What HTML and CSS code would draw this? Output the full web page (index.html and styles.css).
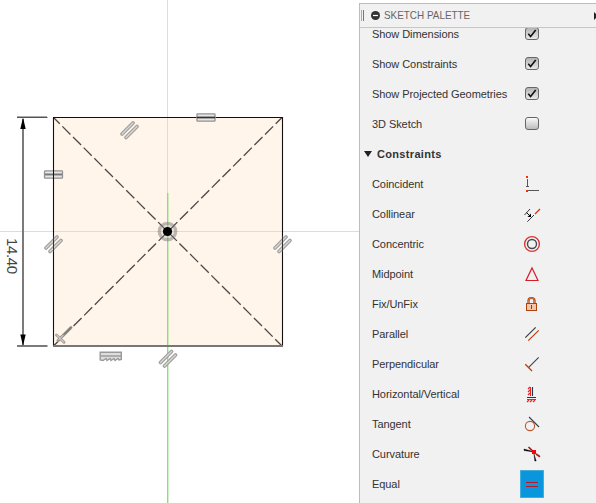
FILE: index.html
```html
<!DOCTYPE html>
<html lang="en">
<head>
<meta charset="utf-8">
<title>Sketch Palette</title>
<link rel="stylesheet" href="styles.css">
</head>
<body>
<main class="app">
  <section class="canvas">
    <svg width="359" height="503" viewBox="0 0 359 503">
      <defs>
        <g id="c-par" fill="none" stroke-linecap="round">
          <path d="M-7 4L4-7M-3 7.500L8-3.500" stroke="#a2a09e" stroke-width="3.800"/>
          <path d="M-7 4L4-7M-3 7.500L8-3.500" stroke="#d9d7d4" stroke-width="1.300"/>
        </g>
        <g id="c-eq" fill="#ddd" fill-opacity=".7" stroke="#929292" stroke-width="1.300">
          <rect x="-9" y="-3.700" width="18" height="3.700" rx=".6"/>
          <rect x="-9" y="0" width="18" height="3.700" rx=".6"/>
        </g>
      </defs>
      <rect x="53.500" y="117.500" width="229" height="228.500" fill="#fff5ea"/>
      <path d="M0 231.500H359M167.500 0V193" stroke="#dedcda"/>
      <rect x="167" y="193" width="1.400" height="310" fill="#86e272"/>
      <g stroke="#4f4743" stroke-width="1.300" stroke-dasharray="11.400 3.650" stroke-dashoffset="2.500">
        <path d="M53.500 117.500L282 346"/>
        <path d="M282 117.500L53.500 346"/>
      </g>
      <path d="M53.500 346V117.500H282.500V346" fill="none" stroke="#111" stroke-width="1.100"/>
      <path d="M53 346H283" stroke="#777" stroke-width="2"/>
      <path d="M17 117.500H47.500M17 117H47" stroke="#555"/>
      <path d="M17 346H47.500M23 119V345" stroke="#7b7b7b" stroke-width="2"/>
      <path d="M23 117.500L25.700 129H20.300ZM23 346L25.700 334.500H20.300Z"/>
      <text class="dimension" transform="translate(7 238) rotate(90)" textLength="36">14.40</text>
      <circle cx="167.500" cy="231.500" r="8.200" fill="none" stroke="#777" stroke-opacity=".5" stroke-width="3.300"/>
      <circle cx="167.500" cy="231.500" r="6.500" fill="#aaa" fill-opacity=".25"/>
      <circle cx="167.500" cy="231.500" r="4.600"/>
      <use href="#c-par" x="129" y="130"/>
      <use href="#c-par" x="53" y="244"/>
      <use href="#c-par" x="282" y="244"/>
      <use href="#c-par" x="167.500" y="358.500"/>
      <use href="#c-eq" x="206" y="117.500"/>
      <use href="#c-eq" x="53.500" y="174.500"/>
      <path d="M197 117.500H215" stroke="#333" stroke-width="1.500"/>
      <path d="M45 174.500H62" stroke="#777" stroke-width="1.500"/>
      <path d="M53.500 169V180" stroke="#111"/>
      <path d="M282.500 236V252M53.500 236V252" stroke="#333"/>
      <g fill="none" stroke="#999" stroke-width="1.400">
        <path d="M100.200 352.200H121.300V359.500L119 360L118 358.500L115 360.500L114 358.500L111 360.500L110 358.500L107 360.500L106 358.500L103 360.500L100.200 360Z" fill="#ddd"/>
        <path d="M101 356H121"/>
      </g>
      <g fill="none" stroke-linecap="round">
        <path d="M56.500 335L64 342.300" stroke="#a8a5a1" stroke-width="3"/>
        <path d="M58 340.500L71 327.500" stroke="#99958f" stroke-width="3"/>
        <path d="M57 335.500L63.500 341.800M58.500 340L63 335.500" stroke="#e2ddd5"/>
        <path d="M64.500 334L71 327.500" stroke="#666"/>
      </g>
    </svg>
  </section>

  <aside class="palette">
    <header class="palette-header">
      <span class="grip"></span>
      <svg class="collapse" width="9" height="9" viewBox="0 0 9 9"><circle cx="4.500" cy="4.500" r="4.500" fill="#333"/><path d="M2 4.500H7" stroke="#fff" stroke-width="1.200"/></svg>
      <h1 class="palette-title">SKETCH PALETTE</h1>
      <svg class="more" width="2" height="8" viewBox="0 0 2 8"><path d="M0 0L2 2V6L0 8Z" fill="#222"/></svg>
    </header>
    <div class="rows-clip">
      <div class="rows">
        <div class="row"><span class="label">Show Dimensions</span><span class="slot"><span class="check on"><svg width="14" height="13" viewBox="0 0 14 13"><path d="M3.300 6.800L5.600 9.500L10.700 3"/></svg></span></span></div>
        <div class="row"><span class="label">Show Constraints</span><span class="slot"><span class="check on"><svg width="14" height="13" viewBox="0 0 14 13"><path d="M3.300 6.800L5.600 9.500L10.700 3"/></svg></span></span></div>
        <div class="row"><span class="label">Show Projected Geometries</span><span class="slot"><span class="check on"><svg width="14" height="13" viewBox="0 0 14 13"><path d="M3.300 6.800L5.600 9.500L10.700 3"/></svg></span></span></div>
        <div class="row"><span class="label">3D Sketch</span><span class="slot"><span class="check"></span></span></div>
        <div class="row group"><span class="triangle"></span><h2 class="group-title">Constraints</h2></div>
        <div class="row"><span class="label">Coincident</span><span class="slot"><svg class="icon" viewBox="0 0 24 24"><path d="M7.500 7V15M6 14.500H9M8 18.500H19" stroke="#55585b"/><path d="M6 4h2v2H6zM6 18h2v2H6z" fill="#ff2a00"/></svg></span></div>
        <div class="row"><span class="label">Collinear</span><span class="slot"><svg class="icon" viewBox="0 0 24 24"><path d="M4.500 13L10 7M7.300 19.700L14 13" stroke="#353941"/><path d="M6.500 10.500L10 14" stroke="#111"/><path d="M11 11.500V15H7.500Z" fill="#000"/><path d="M15 12L20 7" stroke="#cc3514" stroke-width="1.200"/></svg></span></div>
        <div class="row"><span class="label">Concentric</span><span class="slot"><svg class="icon" viewBox="0 0 24 24"><circle cx="12" cy="12" r="7.400" stroke="#dc3838" stroke-width="1.400"/><circle cx="12" cy="12" r="4.500" stroke="#434a55" stroke-width="1.400"/></svg></span></div>
        <div class="row"><span class="label">Midpoint</span><span class="slot"><svg class="icon" viewBox="0 0 24 24"><path d="M12 6L18 18.500H6Z" stroke="#d51e28" stroke-width="1.200"/></svg></span></div>
        <div class="row"><span class="label">Fix/UnFix</span><span class="slot"><svg class="icon" viewBox="0 0 24 24"><path d="M8.500 12V8.500Q8.500 6 11.500 6T14.500 8.500V12" stroke="#a93e0c" stroke-width="2.200"/><path d="M8.500 12V8.500Q8.500 6 11.500 6T14.500 8.500V12" stroke="#e2a47c" stroke-width=".6"/><rect x="6.500" y="11.500" width="10" height="7" fill="#efc6aa" stroke="#ad420d"/><path d="M11.500 13V17" stroke="#9a3b0d"/></svg></span></div>
        <div class="row"><span class="label">Parallel</span><span class="slot"><svg class="icon" viewBox="0 0 24 24"><path d="M5.300 15.700L15.700 5.300" stroke="#383e46" stroke-width="1.200"/><path d="M8.300 18.700L18.700 8.300" stroke="#bf3d08" stroke-width="1.200"/></svg></span></div>
        <div class="row"><span class="label">Perpendicular</span><span class="slot"><svg class="icon" viewBox="0 0 24 24"><path d="M18.700 5.300L8.700 15.300" stroke="#383e46" stroke-width="1.100"/><path d="M5.300 12.300L12 19" stroke="#bf3d08" stroke-width="1.300"/></svg></span></div>
        <div class="row"><span class="label">Horizontal/Vertical</span><span class="slot"><svg class="icon" viewBox="0 0 24 24"><path d="M12.500 5V14M7 15.500H16" stroke="#253447" stroke-width="1.100"/><path d="M10.500 5V14M7 17.500H16" stroke="#ee2222"/><path d="M8 7L10 5M8 10L10 8M8 13L10 11M7 20L9 18M10 20L12 18M13 20L15 18" stroke="#ee2222" stroke-width="1.200"/></svg></span></div>
        <div class="row"><span class="label">Tangent</span><span class="slot"><svg class="icon" viewBox="0 0 24 24"><circle cx="10" cy="14" r="4.600" stroke="#c15730" stroke-width="1.100"/><path d="M9 5L19 15" stroke="#383e46" stroke-width="1.100"/></svg></span></div>
        <div class="row"><span class="label">Curvature</span><span class="slot"><svg class="icon" viewBox="0 0 24 24"><path d="M4 7L12 9.200V9.700L4 8.500ZM14 12L16.200 19H14.800Z" fill="#000" stroke="#000" stroke-width=".4"/><path d="M8.500 5L12 8.300M16 12L20 14.700" stroke="#b3181c" stroke-width="1.700"/><rect x="12" y="8" width="4" height="4" fill="#fc0008"/></svg></span></div>
        <div class="row"><span class="label">Equal</span><span class="slot selected"><svg class="icon" viewBox="0 0 24 24"><path d="M6 10.500H18M6 14.500H18" stroke="#b9182b"/></svg></span></div>
      </div>
    </div>
  </aside>
</main>
</body>
</html>
```
FILE: styles.css
```css
* { box-sizing: border-box; }

body {
  margin: 0;
  background: #fff;
  font-family: "Liberation Sans", Arial, sans-serif;
}

.app {
  display: flex;
  width: 596px;
  height: 503px;
  overflow: hidden;
}

.canvas { width: 359px; flex: none; }
.canvas svg { display: block; }

.dimension {
  font-size: 15px;
  fill: #444;
}

.palette {
  display: flex;
  flex-direction: column;
  flex: 1;
  margin-top: 3px;
  background: #f1f1f1;
  border-left: 1px solid #bdbdbd;
  border-top: 1px solid #bdbdbd;
}

.palette-header {
  display: flex;
  align-items: center;
  flex: none;
  height: 24px;
  border-bottom: 1px solid #c6c6c6;
}

.grip {
  width: 3px;
  height: 11px;
  margin-left: 1px;
  border-left: 1px solid #aaa;
  border-right: 1px solid #777;
}

.collapse { margin-left: 7px; }

.palette-title {
  margin: 0 0 2px 4px;
  font-size: 11px;
  font-weight: 400;
  line-height: 14px;
  color: #666;
  white-space: nowrap;
  transform: scaleX(0.9);
  transform-origin: left;
}

.more { margin-left: auto; }

.rows-clip {
  flex: 1;
  min-height: 0;
  overflow: hidden;
}

.rows { margin-top: -9px; }

.row {
  display: flex;
  align-items: center;
  height: 30px;
  padding-left: 12px;
}

.label {
  width: 148px;
  font-size: 11px;
  line-height: 14px;
  letter-spacing: -0.07px;
  white-space: nowrap;
  color: #333;
}

.slot {
  display: flex;
  align-items: center;
  justify-content: center;
  width: 24px;
  height: 28px;
}

.selected {
  background: #0996dc;
  border: 1px solid #45add9;
}

.icon {
  flex: none;
  width: 24px;
  height: 24px;
  fill: none;
}

.check {
  width: 14px;
  height: 13px;
  margin-bottom: 1px;
  border: 1px solid #666;
  border-radius: 3px;
  background: linear-gradient(#fafafa, #bcbcbc);
}

.on { background: linear-gradient(#b4b4b4, #e8e8e8); }

.check svg {
  display: block;
  margin: -1px;
  fill: none;
  stroke: #111;
  stroke-width: 1.6;
}

.group { padding-left: 4px; }

.triangle {
  border: 4.5px solid transparent;
  border-top: 6px solid #222;
  border-bottom: 0;
}

.group-title {
  margin: 0 0 0 5px;
  font-size: 11px;
  line-height: 14px;
  letter-spacing: 0.33px;
  color: #333;
}
```
